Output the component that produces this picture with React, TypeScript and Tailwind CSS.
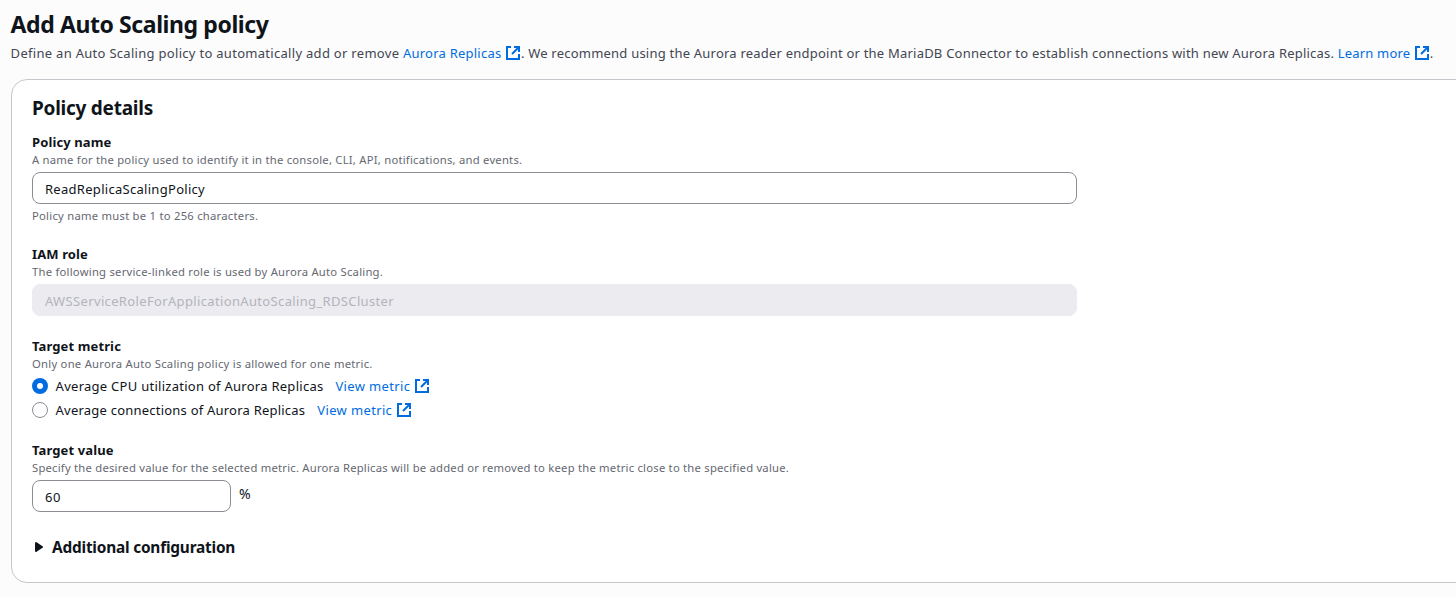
import type { ReactNode } from "react";

function ExternalIcon({ className = "" }: { className?: string }) {
  return (
    <svg viewBox="0 0 16 16" className={"inline-block size-4 shrink-0 " + className} fill="none" stroke="#006ce0" strokeWidth="2" aria-hidden="true">
      <path d="M9 2h5v5" />
      <path d="M7 9l6.5-6.5" />
      <path d="M14 9v5H2V2h4" />
    </svg>
  );
}

function Link({ children, className = "" }: { children: ReactNode; className?: string }) {
  return (
    <a href="#" className={"text-[13px] text-[#006ce0] " + className}>
      {children}
    </a>
  );
}

function Label({ children }: { children: ReactNode }) {
  return <div className="text-[13px] leading-5 font-bold tracking-[0.12px]">{children}</div>;
}

function Hint({ children, className = "" }: { children: ReactNode; className?: string }) {
  return <div className={"text-[11.25px] leading-4 text-[#656871] " + className}>{children}</div>;
}

function Metric({ label, checked, className = "" }: { label: string; checked?: boolean; className?: string }) {
  return (
    <div className="flex h-5 items-center">
      <svg viewBox="0 0 16 16" className="size-4 shrink-0" aria-hidden="true">
        {checked ? (
          <>
            <circle cx="8" cy="8" r="8" fill="#006ce0" />
            <circle cx="8" cy="8" r="3" fill="#fff" />
          </>
        ) : (
          <circle cx="8" cy="8" r="7.5" fill="#fff" stroke="#8c8c94" />
        )}
      </svg>
      <span className={"ml-[7.6px] text-[13px] leading-5 " + className}>{label}</span>
      <Link className="ml-3 flex items-center leading-5 tracking-[0.36px]">
        View metric
        <ExternalIcon className="ml-[3.8px]" />
      </Link>
    </div>
  );
}

export default function App() {
  return (
    <main className="h-[597px] overflow-hidden bg-[#fcfcfd] pl-[10.6px] font-['Noto_Sans',sans-serif] text-[#0f141a]">
      <h1 className="pt-[9px] text-[23px] leading-[30px] font-bold tracking-[-0.41px] whitespace-nowrap">Add Auto Scaling policy</h1>
      <p className="mt-1 h-5 text-[13px] leading-5 whitespace-nowrap text-[#424650]">
        <span className="tracking-[0.295px]">Define an Auto Scaling policy to automatically add or remove </span>
        <Link className="tracking-[0.23px]">Aurora Replicas</Link>
        <ExternalIcon className="ml-[3.5px] align-[-3px]" />
        <span className="tracking-[0.218px]">
          . We recommend using the Aurora reader endpoint or the MariaDB Connector to establish connections with new Aurora Replicas.{" "}
        </span>
        <Link className="tracking-[0.17px]">Learn more</Link>
        <ExternalIcon className="ml-[3.5px] align-[-3px]" />.
      </p>

      <section className="mt-4 ml-[0.4px] h-[504px] w-[1480px] rounded-[16px] border border-[#c6c6cd] bg-white pt-4 pl-5">
        <h2 className="text-[19px] leading-6 font-bold tracking-[-0.25px]">Policy details</h2>

        <div className="mt-3">
          <Label>Policy name</Label>
          <Hint className="tracking-[0.235px]">A name for the policy used to identify it in the console, CLI, API, notifications, and events.</Hint>
          <input
            defaultValue="ReadReplicaScalingPolicy"
            className="mt-1 block h-8 w-[1045px] rounded-lg border border-[#8c8c94] bg-white px-3 pt-0.5 text-[13px] tracking-[0.29px]"
          />
          <Hint className="mt-1 tracking-[0.25px]">Policy name must be 1 to 256 characters.</Hint>
        </div>

        <div className="mt-5">
          <Label>IAM role</Label>
          <Hint className="tracking-[0.24px]">The following service-linked role is used by Aurora Auto Scaling.</Hint>
          <input
            disabled
            defaultValue="AWSServiceRoleForApplicationAutoScaling_RDSCluster"
            className="mt-1 block h-8 w-[1045px] rounded-lg border border-[#ebebf0] bg-[#ebebf0] px-3 pt-0.5 text-[13px] tracking-[0.35px] text-[#b4b4bb]"
          />
        </div>

        <div className="mt-5">
          <Label>Target metric</Label>
          <Hint className="tracking-[0.26px]">Only one Aurora Auto Scaling policy is allowed for one metric.</Hint>
          <div className="mt-1 flex flex-col gap-1">
            <Metric checked label="Average CPU utilization of Aurora Replicas" className="tracking-[0.27px]" />
            <Metric label="Average connections of Aurora Replicas" className="tracking-[0.22px]" />
          </div>
        </div>

        <div className="mt-5">
          <Label>Target value</Label>
          <Hint className="tracking-[0.225px]">
            Specify the desired value for the selected metric. Aurora Replicas will be added or removed to keep the metric close to the specified value.
          </Hint>
          <div className="mt-1 flex">
            <input defaultValue="60" className="h-8 w-[199px] rounded-lg border border-[#8c8c94] bg-white px-3 pt-0.5 text-[13px] tracking-[0.5px]" />
            <span className="mt-1 ml-2 text-[14px] leading-5">%</span>
          </div>
        </div>

        <button className="mt-[23px] flex h-6 items-center">
          <svg viewBox="0 0 16 16" className="size-4" aria-hidden="true">
            <path d="M4 4v8l6-4z" fill="#0f141a" stroke="#0f141a" strokeWidth="2" strokeLinejoin="round" />
          </svg>
          <span className="ml-1 pt-0.5 text-[15.4px] leading-5 font-bold tracking-[-0.2px]">Additional configuration</span>
        </button>
      </section>
    </main>
  );
}
